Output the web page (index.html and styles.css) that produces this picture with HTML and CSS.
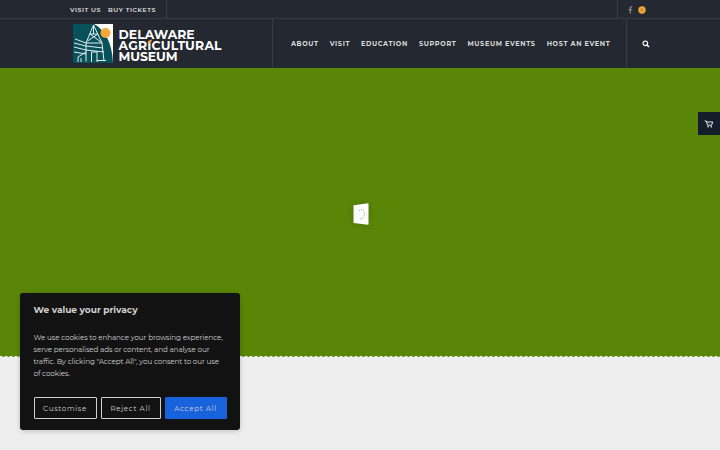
FILE: index.html
```
<!DOCTYPE html>
<html lang="en">
<head>
    <meta charset="UTF-8">
    <meta name="viewport" content="width=device-width, initial-scale=1.0">
    <title>Delaware Agricultural Museum</title>
    <link rel="stylesheet" href="styles.css">
</head>
<body>
    <div class="top-bar">
        <div class="top-links">
            <a class="top-visit">VISIT US</a>
            <a class="top-tickets">BUY TICKETS</a>
        </div>
        <div class="social">
            <svg width="5" height="8" viewBox="0 0 5 8"><path d="M1.6 7.5V4.2H.5V2.9h1.1V2C1.6.8 2.3.3 3.2.3h1v1.3h-.6c-.5 0-.6.2-.6.6v.7h1.2L4 4.2H3v3.3z" fill="#7d8186"/></svg>
            <svg width="8" height="8" viewBox="0 0 8 8"><circle cx="4" cy="4" r="3.7" fill="#f0a63a"/><path d="M2.5 3.1h2.8M2.5 4.1h3M3 5.1h2" stroke="#b97822" stroke-width=".6"/></svg>
        </div>
    </div>

    <header class="header">
        <a class="logo">
            <svg width="150" height="40" viewBox="0 0 150 40">
                <rect width="40" height="39" fill="#fff"/>
                <path d="M0 0H21C32 6 39 18 40 39H0z" fill="#07515b"/>
                <circle cx="32.5" cy="9" r="5" fill="#f9a73b"/>
                <g fill="none" stroke="#fff" stroke-width=".9">
                    <path d="M20.5 1L13 19V37.5M20.5 1L29 19L31 37M17 10H25L14.5 17M17 10L28 18M13 19H29M20.5 2V10"/>
                    <path d="M2 15L13 19M1 19L13 22L30 24M1 23L13 26L31 28M1 28L13 30"/>
                    <path d="M18.5 38V28H24V38M5 38V33L13 28M8 38V34M24 36.5H33"/>
                </g>
                <g class="logo-text">
                    <text x="45.6" y="15.1" textLength="76">DELAWARE</text>
                    <text x="45.6" y="26" textLength="103">AGRICULTURAL</text>
                    <text x="45.6" y="37" textLength="59">MUSEUM</text>
                </g>
                <path d="M74.7 19.2Q75 15.9 78.8 15.4Q79 18.9 74.7 19.2z" fill="#f9a73b"/>
            </svg>
        </a>
        <nav class="nav">
            <a class="nav-about">ABOUT</a>
            <a class="nav-visit">VISIT</a>
            <a class="nav-education">EDUCATION</a>
            <a class="nav-support">SUPPORT</a>
            <a class="nav-events">MUSEUM EVENTS</a>
            <a class="nav-host">HOST AN EVENT</a>
        </nav>
        <div class="search">
            <svg width="8" height="8" viewBox="0 0 8 8" fill="none" stroke="#fff"><circle cx="3.3" cy="3.3" r="2.3" stroke-width="1.2"/><path d="M5 5L7 7" stroke-width="1.5"/></svg>
        </div>
    </header>

    <main class="hero">
        <div class="loader">
            <svg width="16" height="22" viewBox="0 0 16 22">
                <path d="M.5 2.2L15 .2Q15.5.2 15.5.8V21.2Q15.5 21.8 15 21.8L.5 20Z" fill="#fff"/>
                <path d="M6 8Q8 5.5 10 7.2Q12 10 11.2 13Q9.5 17 7 15.4" fill="none" stroke="#999" stroke-width="1" stroke-dasharray="1.2 1.2"/>
            </svg>
        </div>
    </main>
    <section class="content"></section>

    <div class="cart">
        <svg width="10" height="8" viewBox="0 0 10 8"><path d="M.7 1H2.3L3.6 5.2H7.5L8.8 2H2.7" fill="none" stroke="#fff" stroke-width=".9"/><circle cx="4" cy="6.8" r=".8" fill="#fff"/><circle cx="7.2" cy="6.8" r=".8" fill="#fff"/></svg>
    </div>

    <div class="cookie">
        <h2 class="cookie-title">We value your privacy</h2>
        <p class="cookie-text">
            <span>We use cookies to enhance your browsing experience,</span>
            <span>serve personalised ads or content, and analyse our</span>
            <span>traffic. By clicking "Accept All", you consent to our use</span>
            <span>of cookies.</span>
        </p>
        <div class="cookie-buttons">
            <button class="btn btn-customise">Customise</button>
            <button class="btn btn-reject">Reject All</button>
            <button class="btn btn-accept">Accept All</button>
        </div>
    </div>
</body>
</html>
```
FILE: styles.css
```
* {
    box-sizing: border-box;
}

body {
    margin: 0;
    height: 450px;
    overflow: hidden;
    background: #eee;
    font-family: Montserrat, Inter, sans-serif;
}

svg {
    display: block;
}

/* top bar */
.top-bar {
    display: flex;
    justify-content: space-between;
    height: 19px;
    background: #242830;
    border-bottom: 1px solid #383c43;
}

.top-links {
    display: flex;
    align-items: center;
    gap: 7px;
    width: 167px;
    padding: 1px 0 0 70px;
    border-right: 1px solid #383c43;
    color: #e0e1e2;
    font-size: 6.2px;
    font-weight: 600;
    letter-spacing: 0.57px;
    white-space: nowrap;
}

.social {
    display: flex;
    align-items: center;
    gap: 5px;
    width: 103px;
    padding: 1px 0 0 10px;
    border-left: 1px solid #383c43;
}

/* header */
.header {
    display: flex;
    height: 49px;
    background: #242830;
}

.logo {
    width: 272px;
    padding: 5px 0 0 73px;
}

.logo-text {
    fill: #fff;
    font-size: 12.4px;
    font-weight: 700;
}

.nav {
    display: flex;
    align-items: center;
    gap: 11px;
    width: 353.5px;
    padding-left: 18px;
    border-left: 1px solid #383c43;
    color: #d8d9db;
    font-size: 6.5px;
    font-weight: 700;
    letter-spacing: 0.64px;
    white-space: nowrap;
}

.nav-about { width: 27.7px; }
.nav-visit { width: 20.3px; }
.nav-education { width: 47px; }
.nav-support { width: 37.5px; }
.nav-events { width: 68.2px; }

.search {
    display: flex;
    align-items: center;
    width: 94.5px;
    padding-left: 15px;
    border-left: 1px solid #383c43;
}

/* green hero with a stitched lower edge */
.hero {
    display: flex;
    justify-content: center;
    height: 289px;
    padding-top: 135px;
    background:
        repeating-linear-gradient(90deg, #eee 0 2px, #5a8607 3px 4px, #eee 5px) 0 100% / 100% 1.5px no-repeat,
        #5a8607;
}

.loader {
    padding-left: 2px;
}

.loader svg {
    filter: drop-shadow(0 0 3px rgba(0, 0, 0, 0.2));
}

.content {
    height: 93px;
    background: #eee;
}

.cart {
    position: absolute;
    top: 112px;
    right: 0;
    display: flex;
    align-items: center;
    justify-content: center;
    width: 22.5px;
    height: 23px;
    background: #151d2d;
}

/* cookie banner */
.cookie {
    position: absolute;
    top: 293px;
    left: 20px;
    width: 220px;
    height: 137px;
    padding: 10px 13.5px;
    border-radius: 3px;
    background: #121212;
    box-shadow: 0 1px 5px rgba(0, 0, 0, 0.2);
    color: #d0d0d0;
}

.cookie-title {
    margin: 0;
    font-size: 9px;
    line-height: 13px;
    font-weight: 700;
    letter-spacing: 0;
}

.cookie-text {
    margin: 16px 0 0;
    font-size: 7.2px;
    line-height: 12px;
    letter-spacing: -0.1px;
    white-space: nowrap;
}

.cookie-text span {
    display: block;
}

.cookie-buttons {
    display: flex;
    gap: 4px;
    margin-top: 17px;
}

.btn {
    height: 22px;
    padding: 0;
    border: 1px solid #d0d0d0;
    border-radius: 1px;
    background: transparent;
    color: #d0d0d0;
    font-family: inherit;
    font-size: 7.2px;
    letter-spacing: 0.64px;
}

.btn-customise { width: 63px; }
.btn-reject { width: 60px; }

.btn-accept {
    width: 62px;
    border-color: #1863dc;
    background: #1863dc;
}
```
